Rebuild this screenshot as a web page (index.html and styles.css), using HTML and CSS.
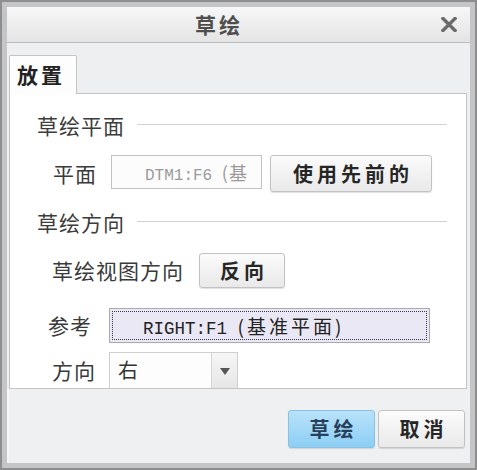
FILE: index.html
```html
<!DOCTYPE html>
<html lang="zh">
<head>
<meta charset="utf-8">
<title>草绘</title>
<link rel="stylesheet" href="styles.css">
</head>
<body>
<div class="window">
  <div class="frame">
    <div class="titlebar">
      <span class="title">草绘</span>
      <svg class="close" width="16" height="15" viewBox="0 0 16 15"><path d="M2 1.5 L14 13.5 M14 1.5 L2 13.5" stroke="#6b6b6b" stroke-width="3.4" stroke-linecap="square"/></svg>
    </div>
    <div class="tabs"><div class="tab">放置</div></div>
    <div class="panel">
      <div class="section"><span class="section-title">草绘平面</span><div class="rule"></div></div>
      <div class="row row-plane">
        <span class="label">平面</span>
        <div class="input"><span class="mono">DTM1:F6&nbsp;</span><span class="cjk">(基</span></div>
        <button class="btn btn-wide">使用先前的</button>
      </div>
      <div class="section"><span class="section-title">草绘方向</span><div class="rule"></div></div>
      <div class="row row-view">
        <span class="label">草绘视图方向</span>
        <button class="btn btn-flip">反向</button>
      </div>
      <div class="row row-ref">
        <span class="label">参考</span>
        <div class="ref"><span class="mono">RIGHT:F1&nbsp;</span><span class="cjk">(基准平面)</span></div>
      </div>
      <div class="row row-dir">
        <span class="label">方向</span>
        <div class="select"><span class="val">右</span><span class="arrow"><span class="tri"></span></span></div>
      </div>
    </div>
    <div class="footer">
      <button class="btn btn-primary">草绘</button>
      <button class="btn btn-cancel">取消</button>
    </div>
  </div>
</div>
</body>
</html>
```

FILE: styles.css
```css
* { box-sizing: border-box; }
html, body { margin: 0; padding: 0; }
body {
  width: 477px;
  height: 470px;
  font-family: "Noto Sans CJK SC", "Noto Sans", sans-serif;
  background: #b8b8b8;
}
.window {
  width: 477px;
  height: 470px;
  border: 2px solid #8e8e8e;
  background: #c4c5c7;
  padding: 5px 5px 5px 5px;
}
.frame {
  height: 456px;
  background: #eeeff1;
  display: flex;
  flex-direction: column;
}
.titlebar {
  height: 36px;
  flex: none;
  display: flex;
  align-items: center;
  background: linear-gradient(#f7f7f7, #e4e4e4);
  border-bottom: 1px solid #bcbcbc;
}
.title {
  margin-left: 188px;
  font-size: 21px;
  font-weight: bold;
  letter-spacing: 3px;
  line-height: 33px;
  color: #4e4e4e;
}
.close {
  margin-left: auto;
  margin-right: 13px;
  margin-top: 0;
}
.tabs {
  height: 50px;
  flex: none;
  padding: 12px 0 0 2px;
  display: flex;
}
.tab {
  width: 68px;
  height: 39px;
  background: #fdfdfd;
  border: 1px solid #c4c4c4;
  border-bottom: none;
  border-radius: 2px 2px 0 0;
  font-size: 21px;
  font-weight: bold;
  letter-spacing: 3px;
  line-height: 36px;
  padding-left: 7px;
  color: #222;
  position: relative;
  z-index: 1;
}
.panel {
  height: 296px;
  flex: none;
  margin: 0 3px 0 2px;
  background: #ffffff;
  border: 1px solid #c4c4c4;
  display: flex;
  flex-direction: column;
}
.section {
  height: 24px;
  flex: none;
  display: flex;
  align-items: center;
  margin-top: 18px;
}
.section:first-child { margin-top: 19px; }
.section-title {
  padding-left: 27px;
  font-size: 21px;
  letter-spacing: 1px;
  line-height: 24px;
  color: #3c3c3c;
}
.rule {
  flex: 1;
  height: 1px;
  background: #d2d2d2;
  margin: -2px 19px 0 12px;
}
.row {
  display: flex;
  align-items: flex-start;
  flex: none;
}
.label {
  font-size: 21px;
  letter-spacing: 1px;
  color: #3a3a3a;
  white-space: nowrap;
  flex: none;
}
.row-plane { margin-top: 18px; height: 37px; }
.row-plane .label { margin-left: 43px; width: 58px; line-height: 36px; }
.row-view { margin-top: 19px; height: 35px; }
.row-view .label { margin-left: 42px; width: 147px; line-height: 35px; }
.row-ref { margin-top: 20px; height: 35px; }
.row-ref .label { margin-left: 38px; width: 61px; line-height: 35px; }
.row-dir { margin-top: 9px; height: 36px; }
.row-dir .label { margin-left: 42px; width: 57px; line-height: 36px; }

.mono { font-family: "Liberation Mono", "DejaVu Sans Mono", monospace; }
.input {
  width: 151px;
  height: 34px;
  border: 1px solid #c2c2c2;
  background: #fcfcfd;
  color: #9a9a9a;
  padding-left: 33px;
  white-space: nowrap;
  overflow: hidden;
  font-size: 16px;
  line-height: 32px;
}
.input .cjk { font-size: 18px; letter-spacing: 1px; }
.btn {
  font-family: "Noto Sans CJK SC", "Noto Sans", sans-serif;
  font-size: 20px;
  font-weight: bold;
  letter-spacing: 4px;
  padding: 0 0 0 4px;
  color: #262626;
  background: linear-gradient(#fbfbfb, #e9e9e9);
  border: 1px solid #c2c2c2;
  border-radius: 3px;
  box-shadow: 0 1px 1px rgba(0,0,0,0.12);
  line-height: 1;
  flex: none;
}
.btn-wide { margin-left: 8px; width: 162px; height: 37px; }
.btn-flip { width: 86px; height: 35px; }
.ref {
  width: 321px;
  height: 35px;
  background: #ebe8f5;
  border: 1px solid #a9a8b4;
  outline: 1px dotted #3a3a3a;
  outline-offset: -4px;
  padding-left: 33px;
  white-space: nowrap;
  overflow: hidden;
  color: #222;
  font-size: 17.5px;
  line-height: 33px;
}
.ref .cjk { font-size: 19px; letter-spacing: 3px; }
.select {
  width: 129px;
  height: 36px;
  border: 1px solid #cfcfcf;
  border-bottom: none;
  background: #fdfdfd;
  display: flex;
}
.val {
  flex: 1;
  padding-left: 8px;
  font-size: 20px;
  line-height: 34px;
  color: #333;
}
.arrow {
  width: 26px;
  border-left: 1px solid #d6d6d6;
  background: linear-gradient(#f6f6f6, #e6e6e6);
  display: flex;
  align-items: center;
  justify-content: center;
}
.tri {
  width: 0;
  height: 0;
  border-left: 5px solid transparent;
  border-right: 5px solid transparent;
  border-top: 7px solid #555;
  margin-top: 2px;
}
.footer {
  flex: 1;
  display: flex;
  justify-content: flex-end;
  align-items: flex-start;
  padding: 21px 5px 0 0;
  gap: 3px;
  background: #eff0f2;
  border-left: 2px solid #f6f6f7;
}
.btn-primary {
  width: 87px;
  height: 38px;
  background: linear-gradient(#b9e2fa, #8ccef4);
  border-color: #88c1e2;
  color: #26405a;
}
.btn-cancel { width: 87px; height: 38px; }
```
